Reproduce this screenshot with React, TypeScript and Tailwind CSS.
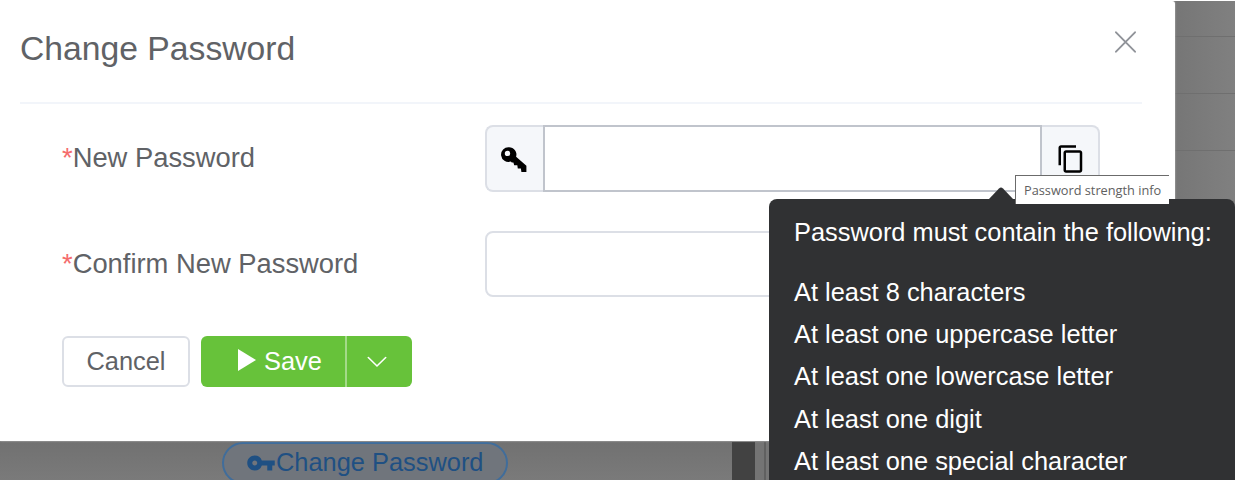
import { MdContentCopy, MdVpnKey } from "react-icons/md";

const rules = [
  "At least 8 characters",
  "At least one uppercase letter",
  "At least one lowercase letter",
  "At least one digit",
  "At least one special character",
];

function KeyIcon() {
  return (
    <svg viewBox="0 0 26 26" className="mt-[2px] mr-[2px] h-[26px] w-[26px]" fill="#000">
      <path
        fillRule="evenodd"
        d="M8 0.2A7.4 7.4 0 0 1 15.1 9.8L25.4 18.8V25H20.4L19.9 21.4H16.8L16.3 18.2H13.2L12.4 15.6H10.8L9.8 14.6A7.4 7.4 0 1 1 8 0.2ZM6.5 3.7A2.7 2.7 0 1 0 6.5 9.1A2.7 2.7 0 1 0 6.5 3.7Z"
      />
    </svg>
  );
}

function Label({ text }: { text: string }) {
  return (
    <label className="w-[423px] shrink-0 text-[27.35px] leading-[66px] text-[#606266]">
      <span className="text-[#f56c6c]">*</span>
      {text}
    </label>
  );
}

function Backdrop() {
  return (
    <div className="flex h-[479px] w-full justify-between bg-[#757575]">
      <div className="flex h-full w-[770px] items-start pt-[441px]">
        <div className="flex h-[38px] w-[732px] overflow-hidden bg-linear-to-b from-[#717171] to-[#7a7a7a] pl-[222px]">
          <div className="flex h-[42px] w-[286px] shrink-0 items-start rounded-full border-2 border-[#406d9b] bg-[#70757c] pl-[22px] text-[#1f5083]">
            <MdVpnKey className="mt-[4px] h-[30px] w-[30px] shrink-0" />
            <span className="text-[25.4px] leading-[36px] whitespace-nowrap">Change Password</span>
          </div>
        </div>
        <div className="h-[38px] w-[23px] bg-[#424242]" />
        <div className="h-[38px] w-[9px] bg-[#747474]" />
        <div className="h-[38px] w-[2px] bg-[#606060]" />
      </div>
      <div className="h-full w-[60px] bg-linear-to-r from-[#767676] to-[#808080]">
        <div className="h-[36px] border-b border-[#6f6f6f]" />
        <div className="h-[57px] border-b border-[#6f6f6f]" />
        <div className="h-[57px] border-b border-[#6f6f6f]" />
      </div>
    </div>
  );
}

export default function App() {
  return (
    <div className="relative h-[480px] w-[1235px] overflow-hidden bg-white pt-px font-['Liberation_Sans',Arial,sans-serif]">
      <Backdrop />
      <section className="absolute top-px left-0 h-[440px] w-[1175px] rounded-tr-[3px] bg-white shadow-[0_0_2px_rgba(255,255,255,0.6)]">
        <header className="ml-5 flex h-[103px] w-[1122px] items-start justify-between border-b-2 border-[#f2f5fa]">
          <h1 className="pt-[24px] text-[33.7px] leading-[46px] text-[#606266]">Change Password</h1>
          <svg viewBox="0 0 22 22" className="mt-[30px] mr-[5px] h-[22px] w-[22px]" fill="none" stroke="#909399" strokeWidth="1.9" strokeLinecap="round">
            <path d="M1 1.3 20 20.7M20 1.3 1 20.7" />
          </svg>
        </header>
        <form className="flex flex-col pt-[21px] pl-[62px]">
          <div className="flex h-[67px]">
            <Label text="New Password" />
            <div className="flex h-[67px] w-[615px]">
              <div className="flex w-[58px] items-center justify-center rounded-l-[8px] border-2 border-r-0 border-[#dcdfe6] bg-[#f5f7fa]">
                <KeyIcon />
              </div>
              <div className="w-[499px] border-2 border-[#c0c4cc] bg-white" />
              <div className="flex w-[58px] items-center justify-center rounded-r-[8px] border-2 border-l-0 border-[#dcdfe6] bg-[#f5f7fa]">
                <MdContentCopy className="ml-[1px] h-[30px] w-[30px] text-black" />
              </div>
            </div>
          </div>
          <div className="mt-[39px] flex h-[66px]">
            <Label text="Confirm New Password" />
            <div className="w-[615px] rounded-[8px] border-2 border-[#dcdfe6] bg-white" />
          </div>
          <div className="mt-[39px] flex h-[51px] gap-[11px] text-[25.4px]">
            <button type="button" className="w-[128px] rounded-[6px] border-2 border-[#dcdfe6] bg-white text-[#606266]">
              Cancel
            </button>
            <div className="flex w-[211px] overflow-hidden rounded-[6px] bg-[#67c23a] text-white">
              <button type="button" className="flex w-[146px] items-center border-r-2 border-[#a4da89] pl-[37px]">
                <svg viewBox="0 0 18 22" className="mt-[-3px] mr-[8px] h-[22px] w-[18px] shrink-0" fill="currentColor">
                  <path d="M0 0 18 11 0 22Z" />
                </svg>
                Save
              </button>
              <button type="button" className="flex flex-1 items-center justify-center">
                <svg viewBox="0 0 20 12" className="mr-[5px] h-[12px] w-[20px]" fill="none" stroke="currentColor" strokeWidth="1.6" strokeLinecap="round">
                  <path d="M1.3 1.5 10 10 18.7 1.5" />
                </svg>
              </button>
            </div>
          </div>
        </form>
      </section>

      <aside className="absolute top-[199px] left-[769px] h-[290px] w-[466px] rounded-[8px] bg-[#303133] pt-[12px] pl-[25px] text-[25.4px] whitespace-nowrap text-white">
        <svg viewBox="0 0 26 13" className="absolute top-[-12px] left-[219px] h-[13px] w-[26px]" fill="#303133">
          <path d="M0 13 11 1.5Q13 -0.5 15 1.5L26 13Z" />
        </svg>
        <p className="leading-[42px]">Password must contain the following:</p>
        <ul className="mt-[18px]">
          {rules.map((rule) => (
            <li key={rule} className="h-[42.2px] leading-[42px]">
              {rule}
            </li>
          ))}
        </ul>
      </aside>

      <div className="absolute top-[175px] left-[1015px] h-[29px] w-[154px] border-t border-l border-[#6b6b6b] bg-white pl-[8px] font-['Open_Sans','Noto_Sans',sans-serif] text-[12.75px] leading-[28px] whitespace-nowrap text-[#606060]">
        Password strength info
      </div>
    </div>
  );
}
